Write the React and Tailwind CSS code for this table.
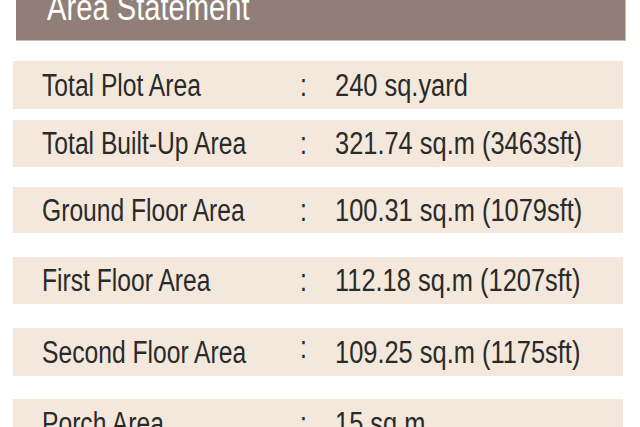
export default function App() {
  const rows = [
    { label: "Total Plot Area", value: "240 sq.yard", h: "h-[48px]", mt: "mt-[20px]" },
    { label: "Total Built-Up Area", value: "321.74 sq.m (3463sft)", h: "h-[47px]", mt: "mt-[11px]" },
    { label: "Ground Floor Area", value: "100.31 sq.m (1079sft)", h: "h-[46px]", mt: "mt-[20px]" },
    { label: "First Floor Area", value: "112.18 sq.m (1207sft)", h: "h-[47px]", mt: "mt-[24px]" },
    { label: "Second Floor Area", value: "109.25 sq.m (1175sft)", h: "h-[48px]", mt: "mt-[24px]", raised: true },
    { label: "Porch Area", value: "15 sq.m", h: "h-[48px]", mt: "mt-[23px]" },
  ];
  return (
    <div
      className="w-[640px] h-[427px] overflow-hidden bg-white"
      style={{ fontFamily: "'Liberation Sans', Arial, sans-serif" }}
    >
      <div className="ml-[16px] w-[610px] h-[41px] bg-[#917f77] border-r border-b border-[#c9bfba] overflow-hidden pl-[31px]">
        <div className="text-[36px] leading-[36px] mt-[-10px] text-white whitespace-nowrap origin-left scale-x-[0.81]">
          Area Statement
        </div>
      </div>
      {rows.map((r) => (
        <div
          key={r.label}
          className={`${r.h} ${r.mt} ml-[13px] w-[610px] bg-[#f3e8db] grid grid-cols-[258px_35px_1fr] items-center pl-[29px] text-[31px] leading-none text-[#2a2a2a] whitespace-nowrap`}
        >
          <div className="origin-left scale-x-[0.795]">{r.label}</div>
          <div className={r.raised ? "-translate-y-[5px] origin-left scale-x-[0.8]" : "origin-left scale-x-[0.8]"}>:</div>
          <div className="origin-left scale-x-[0.82]">{r.value}</div>
        </div>
      ))}
    </div>
  );
}
